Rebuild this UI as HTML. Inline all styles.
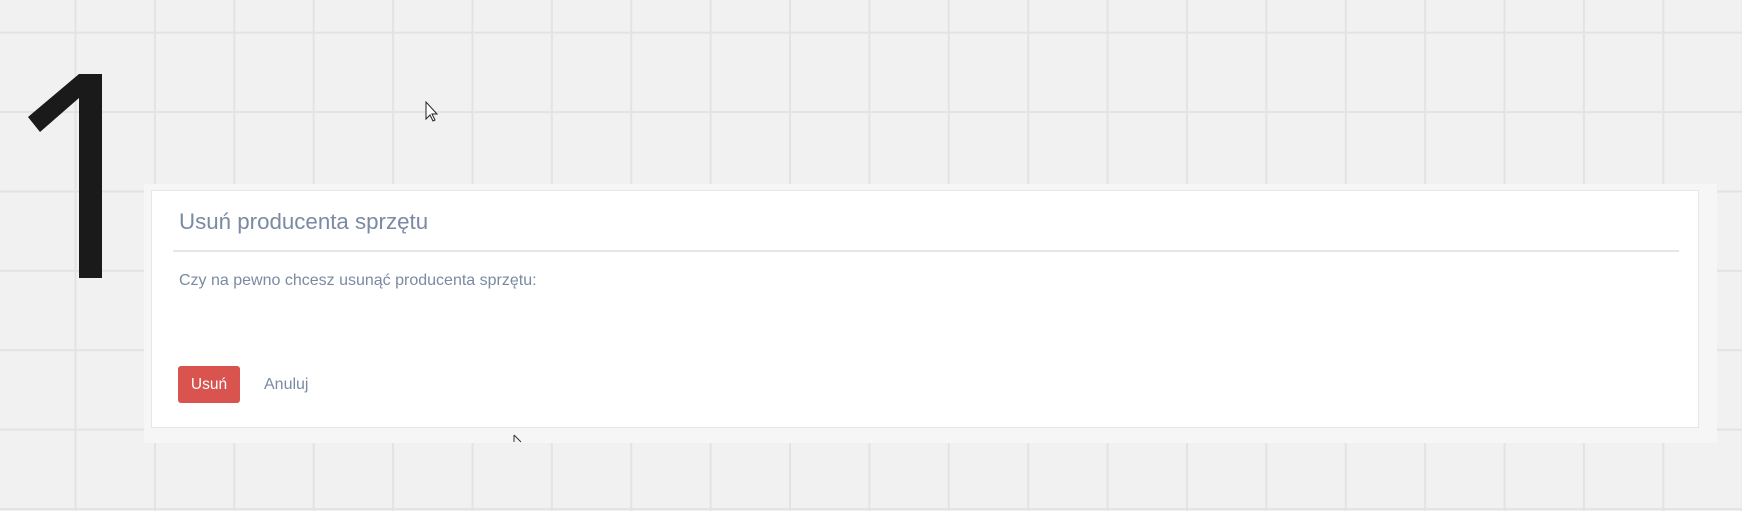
<!DOCTYPE html>
<html><head><meta charset="utf-8"><style>
html,body{margin:0;padding:0}
body{width:1742px;height:511px;position:relative;overflow:hidden;background-color:#f1f1f1;
background-image:linear-gradient(to right,#e3e3e3 0,#e3e3e3 2px,transparent 2px),linear-gradient(to bottom,#e3e3e3 0,#e3e3e3 2px,transparent 2px);
background-size:79.4px 79.4px;background-position:74.5px 31.7px;font-family:"Liberation Sans",Arial,sans-serif}
.outer{position:absolute;left:144px;top:184px;width:1573px;height:259px;background:#f6f6f6}
.inner{position:absolute;left:151px;top:190px;width:1548px;height:238px;background:#fff;border:1px solid #e6e6e6;box-sizing:border-box}
.title{position:absolute;left:179px;top:209px;font-size:22.3px;color:#7a8aa2;white-space:nowrap}
.hr{position:absolute;left:173px;top:250px;width:1506px;height:2px;background:#e5e6ea}
.body{position:absolute;left:179px;top:272px;font-size:16px;color:#7a8aa2;white-space:nowrap}
.btn{position:absolute;left:178px;top:366px;width:62px;height:37px;background:#d9534f;border-radius:3px;color:#fff;font-size:15.5px;line-height:37px;text-align:center}
.cancel{position:absolute;left:264px;top:366px;line-height:37px;font-size:16px;color:#7a8aa2}
svg{position:absolute;left:0;top:0}
</style></head><body>
<div class="outer"></div>
<div class="inner"></div>
<div class="title">Usuń producenta sprzętu</div>
<div class="hr"></div>
<div class="body">Czy na pewno chcesz usunąć producenta sprzętu:</div>
<div class="btn">Usuń</div>
<div class="cancel">Anuluj</div>
<svg width="1742" height="511">
<polygon points="79,74 102,74 102,278 79,278 79,98 40,132 28,117" fill="#1a1a1a"/>
<path d="M426,102 L426,119 L430,115 L433,121 L435,120 L432,114 L437,114 Z" fill="#fff" stroke="#222" stroke-width="1"/>
<path d="M514,435 L514,442 M514,435 L521,442" stroke="#333" stroke-width="1" fill="none"/>
</svg>
</body></html>
